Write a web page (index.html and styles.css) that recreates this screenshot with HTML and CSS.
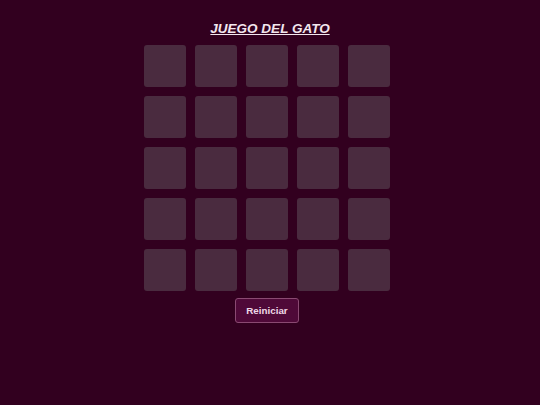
FILE: index.html
```html
<!DOCTYPE html>
<html lang="es">
<head>
  <meta charset="UTF-8" />
  <meta name="viewport" content="width=device-width, initial-scale=1.0"/>
  <title>Juego del Gato</title>
  <link rel="stylesheet" href="styles.css">
</head>
<body>

  <main class="game">
    <h1 class="title">JUEGO DEL GATO</h1>

    <div class="board" id="board">
      <div class="cell"></div><div class="cell"></div><div class="cell"></div><div class="cell"></div><div class="cell"></div>
      <div class="cell"></div><div class="cell"></div><div class="cell"></div><div class="cell"></div><div class="cell"></div>
      <div class="cell"></div><div class="cell"></div><div class="cell"></div><div class="cell"></div><div class="cell"></div>
      <div class="cell"></div><div class="cell"></div><div class="cell"></div><div class="cell"></div><div class="cell"></div>
      <div class="cell"></div><div class="cell"></div><div class="cell"></div><div class="cell"></div><div class="cell"></div>
    </div>

    <button class="reset" id="reset">Reiniciar</button>
  </main>

</body>
</html>
```

FILE: styles.css
```css
* { margin: 0; padding: 0; box-sizing: border-box; }
html, body {
  height: 100%;
  background: #32001f;
  font-family: 'Liberation Sans', Arial, sans-serif;
}

.game {
  display: flex;
  flex-direction: column;
  align-items: center;
  padding-top: 21px;
}

/* titulo */
.title {
  font-size: 13.5px;
  font-style: italic;
  font-weight: bold;
  text-decoration: underline;
  color: #f3e6ee;
  line-height: 16px;
  margin-bottom: 8px;
}

/* tablero 5x5 */
.board {
  display: grid;
  grid-template-columns: repeat(5, 42px);
  grid-auto-rows: 42px;
  gap: 9px;
  margin-right: 6px;
}
.cell {
  background: #4a2b3f;
  border-radius: 3px;
}

.reset {
  margin-top: 7px;
  margin-right: 6px;
  width: 64px;
  height: 25px;
  background: #4f0938;
  color: #eed8e6;
  border: 1px solid #8a4a72;
  border-radius: 3px;
  font-family: 'Liberation Sans', Arial, sans-serif;
  font-size: 9.8px;
  font-weight: bold;
  cursor: pointer;
}
```
